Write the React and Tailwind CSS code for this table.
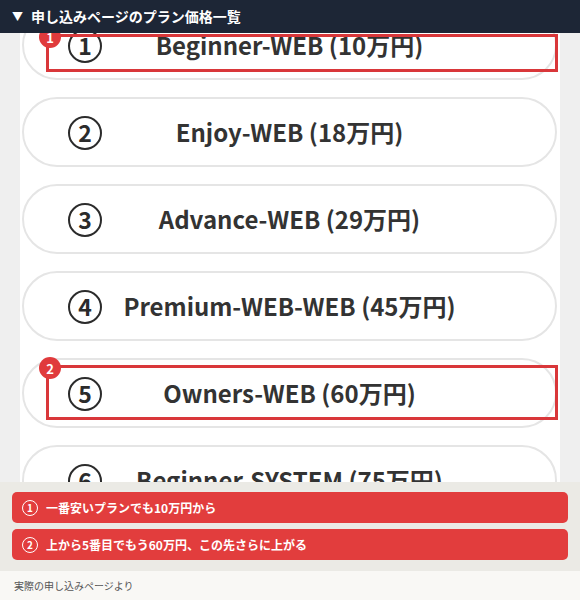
import React from "react";

const plans = [
  { n: "1", title: "Beginner-WEB (10万円)", box: "first" },
  { n: "2", title: "Enjoy-WEB (18万円)" },
  { n: "3", title: "Advance-WEB (29万円)" },
  { n: "4", title: "Premium-WEB-WEB (45万円)" },
  { n: "5", title: "Owners-WEB (60万円)", box: "second" },
  { n: "6", title: "Beginner-SYSTEM (75万円)" },
];

function Circled({ n }) {
  return (
    <div className="w-[34px] h-[34px] rounded-full border-[2.5px] border-[#2b2b2b] flex items-center justify-center text-[23px] font-bold text-[#2b2b2b] leading-none">
      <span className="-mt-[1px]">{n}</span>
    </div>
  );
}

function Badge({ n }) {
  return (
    <div className="absolute -left-[10px] -top-[11px] w-[22px] h-[22px] rounded-full bg-[#e03a3c] text-white text-[13px] font-bold flex items-center justify-center leading-none">
      {n}
    </div>
  );
}

function Pill({ plan }) {
  return (
    <div className="relative h-[70px] w-[535px] shrink-0 rounded-full border-2 border-[#e5e5e5] bg-white grid grid-cols-[1fr_auto_1fr] items-center px-[44px]">
      <div className="justify-self-start pt-[2px]">
        <Circled n={plan.n} />
      </div>
      <div className="text-[24px] font-bold text-[#333] whitespace-nowrap">
        {plan.title}
      </div>
      <div />
      {plan.box === "first" && (
        <div className="absolute left-[22px] top-[22px] w-[512px] h-[38px] border-[3px] border-[#d9373a]">
          <Badge n="1" />
        </div>
      )}
      {plan.box === "second" && (
        <div className="absolute left-[22px] top-[5px] w-[512px] h-[55px] border-[3px] border-[#d9373a]">
          <Badge n="2" />
        </div>
      )}
    </div>
  );
}

function NoteBar({ n, text }) {
  return (
    <div className="h-[31px] rounded-[5px] bg-[#e23d3d] flex items-center px-[10px] gap-[8px] text-white">
      <div className="w-[16px] h-[16px] rounded-full border-[1.5px] border-white flex items-center justify-center text-[10px] font-bold leading-none">
        {n}
      </div>
      <span className="text-[12px] font-bold">{text}</span>
    </div>
  );
}

export default function App() {
  return (
    <div className="relative w-[580px] h-[600px] overflow-hidden bg-[#f9f8f5] font-['Noto_Sans_CJK_JP','Noto_Sans',sans-serif]">
      <div className="h-[482px] overflow-hidden bg-[#efefef]">
        <div className="ml-[20px] w-[540px] h-full bg-white pt-[10px] pl-[2px] flex flex-col gap-[17px]">
          {plans.map((p) => (
            <Pill key={p.n} plan={p} />
          ))}
        </div>
      </div>
      <div className="absolute top-0 left-0 w-full h-[33px] bg-[#1d2636] flex items-center pl-[12px] gap-[8px] text-white">
        <span className="text-[11px]">▼</span>
        <span className="text-[14px] font-bold">申し込みページのプラン価格一覧</span>
      </div>
      <div className="h-[89px] bg-[#ebeae5] px-[12px] pt-[10px] flex flex-col gap-[6px]">
        <NoteBar n="1" text="一番安いプランでも10万円から" />
        <NoteBar n="2" text="上から5番目でもう60万円、この先さらに上がる" />
      </div>
      <div className="h-[29px] flex items-center pl-[14px] text-[10px] text-[#555]">
        実際の申し込みページより
      </div>
    </div>
  );
}
